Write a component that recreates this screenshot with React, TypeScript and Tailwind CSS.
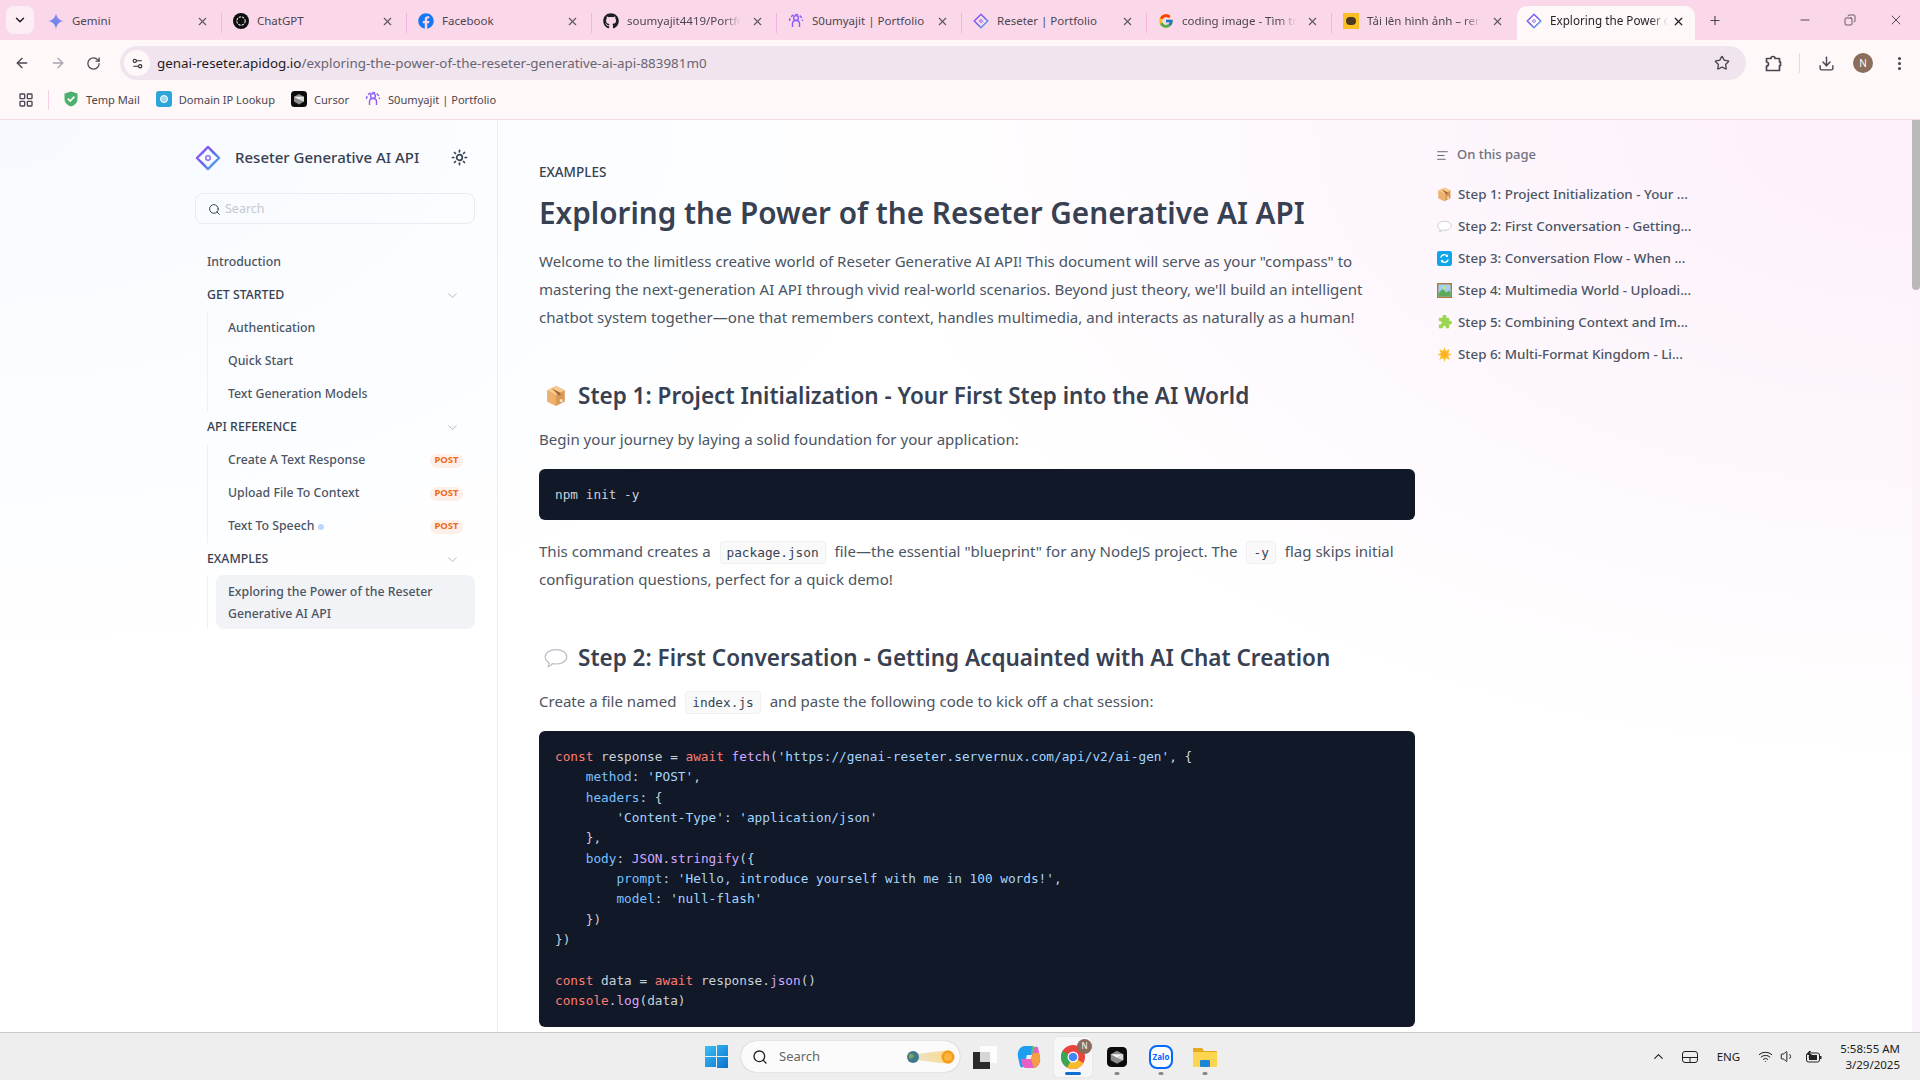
import type { ReactNode } from "react";
import {
  ArrowLeft,
  ArrowRight,
  ChevronDown,
  ChevronUp,
  Download,
  EllipsisVertical,
  LayoutGrid,
  Minus,
  Plus,
  RotateCw,
  Search,
  Settings2,
  Star,
  Sun,
  Volume1,
  Wifi,
  X,
  AlignLeft,
  Copy,
} from "lucide-react";
import { FaFacebook, FaGithub } from "react-icons/fa";
import { FcGoogle } from "react-icons/fc";

const ui = "font-['Noto_Sans','Open_Sans',sans-serif]";
const mono = "font-['DejaVu_Sans_Mono','Liberation_Mono',monospace]";

/* ---------- small drawings ---------- */

const ResetLogo = ({ size = 16 }: { size?: number }) => (
  <svg width={size} height={size} viewBox="0 0 28 28" fill="none">
    <defs>
      <linearGradient id="rl" x1="0" y1="0" x2="1" y2="1">
        <stop offset="0" stopColor="#a855f7" />
        <stop offset="0.5" stopColor="#6d5bf0" />
        <stop offset="1" stopColor="#4fc3e8" />
      </linearGradient>
    </defs>
    <path d="M14 2 Q18 9 26 14 Q18 19 14 26 Q10 19 2 14 Q10 9 14 2 Z" stroke="#5ed3e6" strokeWidth="1.4" strokeLinejoin="round" />
    <path d="M14 2 L26 14 L14 26 L2 14 Z" stroke="url(#rl)" strokeWidth="2.4" strokeLinejoin="round" />
    <circle cx="14" cy="14" r="2.4" stroke="#8b6cf0" strokeWidth="1.6" />
  </svg>
);

const PersonLogo = () => (
  <svg width="16" height="16" viewBox="0 0 16 16" fill="none" stroke="#8b5cf6" strokeWidth="1.4">
    <circle cx="8" cy="5" r="2.4" />
    <path d="M4.5 14 V10.5 a3.5 3 0 0 1 7 0 V14" />
    <path d="M1.5 8 a6.5 6.5 0 0 1 13 0" strokeDasharray="3 1.6" />
  </svg>
);

const GeminiStar = () => (
  <svg width="16" height="16" viewBox="0 0 16 16">
    <defs>
      <linearGradient id="gem" x1="0" y1="1" x2="1" y2="0">
        <stop offset="0" stopColor="#4285f4" />
        <stop offset="1" stopColor="#a98ae8" />
      </linearGradient>
    </defs>
    <path d="M8 0 C8.6 4.6 11.4 7.4 16 8 C11.4 8.6 8.6 11.4 8 16 C7.4 11.4 4.6 8.6 0 8 C4.6 7.4 7.4 4.6 8 0 Z" fill="url(#gem)" />
  </svg>
);

const ChatGptIcon = () => (
  <svg width="16" height="16" viewBox="0 0 16 16">
    <circle cx="8" cy="8" r="8" fill="#0d0d0d" />
    <circle cx="8" cy="8" r="4.2" fill="none" stroke="#e5e5e5" strokeWidth="1.1" strokeDasharray="2.4 1" />
  </svg>
);

const CursorIcon = ({ size = 16 }: { size?: number }) => (
  <svg width={size} height={size} viewBox="0 0 16 16">
    <rect width="16" height="16" rx="3.5" fill="#0b0b0b" />
    <path d="M8 3 L13 5.8 V10.6 L8 13.4 L3 10.6 V5.8 Z" fill="#8d8d8d" />
    <path d="M3 5.8 L13 5.8 L8 8.6 Z" fill="#f4f4f4" />
    <path d="M8 8.6 L13 5.8 V10.6 Z" fill="#d8d8d8" />
  </svg>
);

const BoxEmoji = ({ size = 14 }: { size?: number }) => (
  <svg width={size} height={size} viewBox="0 0 20 20">
    <path d="M10 1 L18 4.8 V15 L10 19 Z" fill="#d99a56" />
    <path d="M10 1 L2 4.8 V15 L10 19 Z" fill="#f2b76e" />
    <path d="M2 4.8 L10 9 L18 4.8 L10 1 Z" fill="#f8cc8f" />
    <path d="M10 9 V19 L2 15 V4.8 Z" fill="#eeb06a" />
    <path d="M6 2.9 L14 7 V10 L12 9.2" fill="#a9683a" />
    <rect x="13.5" y="13" width="2.5" height="2.5" fill="#f7e4c8" />
  </svg>
);

const BubbleEmoji = ({ size = 15 }: { size?: number }) => (
  <svg width={size} height={size} viewBox="0 0 20 20">
    <path
      d="M10 3 C15.2 3 19 5.6 19 9 C19 12.4 15.2 15 10 15 C9 15 8 14.9 7 14.7 C6 16 4.6 17 3.4 17.3 C4 16.3 4.3 15.2 4.3 13.9 C2.2 12.8 1 11 1 9 C1 5.6 4.8 3 10 3 Z"
      fill="#ffffff"
      stroke="#b9bec6"
      strokeWidth="1"
    />
  </svg>
);

const RefreshEmoji = () => (
  <svg width="15" height="15" viewBox="0 0 16 16">
    <rect width="16" height="16" rx="2.5" fill="#0ea5e9" />
    <path d="M4 7 a4 4 0 0 1 7-1.6 M12 9 a4 4 0 0 1-7 1.6" stroke="#fff" strokeWidth="1.5" fill="none" />
    <path d="M11.8 3.4 V6.4 H8.8 Z M4.2 12.6 V9.6 H7.2 Z" fill="#fff" />
  </svg>
);

const PictureEmoji = () => (
  <svg width="15" height="15" viewBox="0 0 16 16">
    <rect width="16" height="16" fill="#b5763d" />
    <rect x="1.5" y="1.5" width="13" height="13" fill="#9ad4ee" />
    <path d="M1.5 11 L6 6.5 L10 10 L12.5 8 L14.5 10 V14.5 H1.5 Z" fill="#5dab58" />
    <circle cx="8" cy="5" r="1.6" fill="#f9d65c" />
  </svg>
);

const PuzzleEmoji = () => (
  <svg width="15" height="15" viewBox="0 0 16 16">
    <path
      d="M6 1.5 a2 2 0 0 1 4 0 V3 h3 v3 h1 a2 2 0 0 1 0 4 h-1 v4 H9.5 v-1 a1.6 1.6 0 0 0-3.2 0 v1 H2 v-4 h1.2 a1.8 1.8 0 0 0 0-3.6 H2 V3 h4 Z"
      fill="#9ad651"
    />
  </svg>
);

const SunEmoji = () => (
  <svg width="15" height="15" viewBox="0 0 16 16">
    <path
      d="M8 0 L9.4 4 L13.6 2.4 L12 6.6 L16 8 L12 9.4 L13.6 13.6 L9.4 12 L8 16 L6.6 12 L2.4 13.6 L4 9.4 L0 8 L4 6.6 L2.4 2.4 L6.6 4 Z"
      fill="#fbc531"
    />
    <circle cx="8" cy="8" r="3.4" fill="#fdb022" />
  </svg>
);

/* ---------- browser chrome ---------- */

const tabs: { icon: ReactNode; title: string; fade?: boolean; sep?: boolean }[] = [
  { icon: <GeminiStar />, title: "Gemini", sep: true },
  { icon: <ChatGptIcon />, title: "ChatGPT", sep: true },
  { icon: <FaFacebook className="text-[#1877f2]" size={16} />, title: "Facebook", sep: true },
  { icon: <FaGithub className="text-[#1b1f23]" size={16} />, title: "soumyajit4419/Portfolio", fade: true, sep: true },
  { icon: <PersonLogo />, title: "S0umyajit | Portfolio", sep: true },
  { icon: <ResetLogo />, title: "Reseter | Portfolio", sep: true },
  { icon: <FcGoogle size={16} />, title: "coding image - Tìm trên Google", fade: true, sep: true },
  {
    icon: (
      <span className="flex h-4 w-4 items-center justify-center bg-[#fbbf24]">
        <span className="h-2 w-2.5 rounded-sm bg-[#4a3b1e]" />
      </span>
    ),
    title: "Tải lên hình ảnh – render",
    fade: true,
  },
];

const Tab = ({ icon, title, fade, sep }: { icon: ReactNode; title: string; fade?: boolean; sep?: boolean }) => (
  <div className="relative flex h-[34px] w-[185px] shrink-0 items-center pb-1 pl-[11px]">
    <span className="flex w-[24px] shrink-0">{icon}</span>
    <span
      className={`w-[114px] overflow-hidden whitespace-nowrap text-[11.5px] text-[#4b4650] ${
        fade ? "[mask-image:linear-gradient(to_right,black_85%,transparent)]" : ""
      }`}
    >
      {title}
    </span>
    <X size={13} strokeWidth={2} className="ml-[10px] text-[#5a5560]" />
    {sep && <span className="absolute right-0 top-[7px] h-[20px] w-[1.5px] bg-[#f4b3dc]" />}
  </div>
);

const TabStrip = () => (
  <div className={`flex h-10 items-end bg-[#fad8ea] ${ui}`}>
    <div className="mb-[6px] ml-[6px] mr-[3px] flex h-[28px] w-[28px] items-center justify-center rounded-lg bg-[#fdeef6]">
      <ChevronDown size={14} strokeWidth={2.5} className="text-[#1f1f1f]" />
    </div>
    {tabs.map((t) => (
      <Tab key={t.title} {...t} />
    ))}
    <div className="relative flex h-[34px] w-[178px] shrink-0 items-center rounded-t-[10px] bg-[#fff8f8] pb-1 pl-[9px]">
      <span className="flex w-[24px] shrink-0">
        <ResetLogo />
      </span>
      <span className="w-[118px] overflow-hidden whitespace-nowrap text-[11.7px] text-[#26222c] [mask-image:linear-gradient(to_right,black_85%,transparent)]">
        Exploring the Power of
      </span>
      <X size={13} strokeWidth={2.4} className="ml-[4px] text-[#26222c]" />
    </div>
    <div className="mb-[6px] ml-[13px] flex h-[28px] w-[14px] items-center justify-center">
      <Plus size={15} strokeWidth={2} className="text-[#4b4650]" />
    </div>
    <div className="mb-[6px] ml-auto flex h-[28px] items-center gap-[32px] pr-[16px] text-[#2f2a33]">
      <Minus size={14} strokeWidth={1.4} />
      <Copy size={12} strokeWidth={1.4} className="-scale-x-100" />
      <X size={16} strokeWidth={1.2} />
    </div>
  </div>
);

const Toolbar = () => (
  <div className={`flex h-10 items-center bg-[#fff8f8] pt-[6px] ${ui}`}>
    <div className="flex w-[120px] items-center gap-[20px] pl-[14px]">
      <ArrowLeft size={16} strokeWidth={2} className="text-[#4c4450]" />
      <ArrowRight size={16} strokeWidth={2} className="text-[#aaa3ad]" />
      <RotateCw size={15} strokeWidth={2} className="text-[#4c4450]" />
    </div>
    <div className="flex h-[34px] w-[1626px] items-center rounded-full bg-[#f0e5ee] pl-[4px] pr-[16px]">
      <span className="flex h-[26px] w-[26px] items-center justify-center rounded-full bg-[#fff8f8]">
        <Settings2 size={13} strokeWidth={2} className="text-[#2f2a33]" />
      </span>
      <span className="ml-[7px] whitespace-nowrap text-[13.4px] text-[#6a6370]">
        <span className="text-[#1f1b24]">genai-reseter.apidog.io</span>
        /exploring-the-power-of-the-reseter-generative-ai-api-883981m0
      </span>
      <Star size={16} strokeWidth={2} className="ml-auto text-[#4c4450]" />
    </div>
    <div className="flex flex-1 items-center pl-[19px] text-[#4c4450]">
      <svg width="17" height="17" viewBox="0 0 17 17" fill="none" stroke="#4c4450" strokeWidth="1.7" strokeLinejoin="round">
        <path d="M1.5 3.5 H6 a2 2 0 0 1 4 0 H14.5 V7 H15.5 V10.5 H14.5 V15.5 H1.5 V11 a2 2 0 0 0 0-4 Z" />
      </svg>
      <span className="ml-[17px] h-[20px] w-[1px] bg-[#f6cfe4]" />
      <Download size={17} strokeWidth={2} className="ml-[18px]" />
      <span className="ml-[18px] flex h-[20px] w-[20px] items-center justify-center rounded-full bg-[#8a6d5c] text-[10px] text-white">
        N
      </span>
      <EllipsisVertical size={17} strokeWidth={2.4} className="ml-[18px]" />
    </div>
  </div>
);

const Bookmark = ({ icon, label }: { icon: ReactNode; label: string }) => (
  <div className="flex items-center gap-[7px]">
    {icon}
    <span className="whitespace-nowrap pt-[1px] text-[11.1px] text-[#4b4650]">{label}</span>
  </div>
);

const Bookmarks = () => (
  <div className={`flex h-10 items-center border-b border-[#f3dce8] bg-[#fff8f8] pl-[18px] ${ui}`}>
    <LayoutGrid size={16} strokeWidth={2} className="text-[#4c4450]" />
    <span className="ml-[14px] mr-[14px] h-[20px] w-[1px] bg-[#f6cfe4]" />
    <div className="flex items-center gap-[16px]">
      <Bookmark
        icon={
          <svg width="16" height="16" viewBox="0 0 16 16">
            <path d="M8 0.5 L14.5 2.5 V8 C14.5 11.5 11.5 14.5 8 15.5 C4.5 14.5 1.5 11.5 1.5 8 V2.5 Z" fill="#4caf6e" />
            <path d="M4.8 7.6 L7.2 10 L11.4 5.6" fill="none" stroke="#fff" strokeWidth="1.7" />
          </svg>
        }
        label="Temp Mail"
      />
      <Bookmark
        icon={
          <span className="flex h-4 w-4 items-center justify-center rounded-[3px] bg-[#2ea5d8]">
            <span className="h-2 w-2 rounded-full border border-white bg-[#9ad7ee]" />
          </span>
        }
        label="Domain IP Lookup"
      />
      <Bookmark icon={<CursorIcon />} label="Cursor" />
      <Bookmark icon={<PersonLogo />} label="S0umyajit | Portfolio" />
    </div>
  </div>
);

/* ---------- docs sidebar ---------- */

const PostBadge = () => (
  <span className="ml-auto mr-[12px] flex h-[14px] w-[33px] items-center justify-center rounded-full bg-[#fdf0e8] text-[9.5px] font-bold text-[#f26a1b]">
    POST
  </span>
);

const GroupHead = ({ label }: { label: string }) => (
  <div className="flex h-[33px] items-center pl-[12px] pr-[15px] text-[12.3px] font-medium text-[#374151]">
    {label}
    <ChevronDown size={15} strokeWidth={1.3} className="ml-auto text-[#a8adb6]" />
  </div>
);

const NavItem = ({ children, post }: { children: ReactNode; post?: boolean }) => (
  <div className="flex h-[33px] items-center pl-[12px] text-[12.3px] font-medium text-[#4b5563]">
    {children}
    {post && <PostBadge />}
  </div>
);

const Nested = ({ children }: { children: ReactNode }) => (
  <div className="ml-[12px] border-l border-[#eef0f3] pl-[8px]">{children}</div>
);

const Sidebar = () => (
  <aside className="h-full w-[498px] shrink-0 border-r border-[#eceef2] pl-[195px] pr-[22px]">
    <div className="flex h-[73px] items-center pt-[2px]">
      <ResetLogo size={26} />
      <span className="ml-[14px] text-[15px] font-medium text-[#374151]">Reseter Generative AI API</span>
      <Sun size={17} strokeWidth={2.4} className="ml-auto mr-[7px] text-[#374151]" />
    </div>
    <div className="flex h-[31px] items-center rounded-lg border border-[#e8ebef] pl-[12px] pt-[1px]">
      <Search size={13} strokeWidth={1.8} className="text-[#374151]" />
      <span className="ml-[4px] pt-[1px] text-[12.5px] text-[#c3c7ce]">Search</span>
    </div>
    <div className="mt-[22px]">
      <NavItem>Introduction</NavItem>
      <GroupHead label="GET STARTED" />
      <Nested>
        <NavItem>Authentication</NavItem>
        <NavItem>Quick Start</NavItem>
        <NavItem>Text Generation Models</NavItem>
      </Nested>
      <GroupHead label="API REFERENCE" />
      <Nested>
        <NavItem post>Create A Text Response</NavItem>
        <NavItem post>Upload File To Context</NavItem>
        <NavItem post>
          Text To Speech
          <span className="ml-[4px] h-[6px] w-[6px] rounded-full bg-[#bcd7ff]" />
        </NavItem>
      </Nested>
      <GroupHead label="EXAMPLES" />
      <Nested>
        <div className="-mt-px rounded-lg bg-[#f2f3f7] pb-[4px] pl-[12px] pr-[8px] pt-[6px] text-[12.3px] font-medium leading-[22px] text-[#4b5563]">
          Exploring the Power of the Reseter Generative AI API
        </div>
      </Nested>
    </div>
  </aside>
);

/* ---------- article ---------- */

const InlineCode = ({ children }: { children: ReactNode }) => (
  <code className={`mx-[5px] rounded-[4px] border border-[#f0f0f2] bg-[#f9f9fa] px-[6px] py-[3px] text-[12.75px] leading-none text-[#374151] ${mono}`}>
    {children}
  </code>
);

const H2 = ({ icon, children }: { icon: ReactNode; children: ReactNode }) => (
  <h2 className="mt-[47px] flex h-[36px] items-center gap-[9px] pl-[3px] text-[22.5px] font-semibold text-[#374151]">
    <span className="flex w-[27px] justify-center">{icon}</span>
    {children}
  </h2>
);

type Tok = [string, "k" | "s" | "p" | "f" | "t"];

const tokColor: Record<Tok[1], string> = {
  k: "text-[#ff7b72]",
  s: "text-[#a5d6ff]",
  p: "text-[#79c0ff]",
  f: "text-[#d2a8ff]",
  t: "text-[#c9d1d9]",
};

const code: Tok[][] = [
  [
    ["const", "k"],
    [" response = ", "t"],
    ["await", "k"],
    [" ", "t"],
    ["fetch", "f"],
    ["(", "t"],
    ["'https://genai-reseter.servernux.com/api/v2/ai-gen'", "s"],
    [", {", "t"],
  ],
  [["    ", "t"], ["method", "p"], [": ", "t"], ["'POST'", "s"], [",", "t"]],
  [["    ", "t"], ["headers", "p"], [": {", "t"]],
  [["        ", "t"], ["'Content-Type'", "s"], [": ", "t"], ["'application/json'", "s"]],
  [["    },", "t"]],
  [["    ", "t"], ["body", "p"], [": ", "t"], ["JSON", "f"], [".", "t"], ["stringify", "f"], ["({", "t"]],
  [["        ", "t"], ["prompt", "p"], [": ", "t"], ["'Hello, introduce yourself with me in 100 words!'", "s"], [",", "t"]],
  [["        ", "t"], ["model", "p"], [": ", "t"], ["'null-flash'", "s"]],
  [["    })", "t"]],
  [["})", "t"]],
  [[" ", "t"]],
  [["const", "k"], [" data = ", "t"], ["await", "k"], [" response.", "t"], ["json", "f"], ["()", "t"]],
  [["console", "k"], [".", "t"], ["log", "f"], ["(data)", "t"]],
];

const Article = () => (
  <main className="w-[917px] shrink-0 pl-[41px] pt-[42px] text-[#4b5563]">
    <div className="h-[20px] text-[13.5px] font-medium leading-[20px] text-[#374151]">EXAMPLES</div>
    <h1 className="mt-[11px] text-[29.7px] font-semibold leading-[40px] text-[#374151]">
      Exploring the Power of the Reseter Generative AI API
    </h1>
    <p className="mt-[14px] text-[15.05px] leading-[28px]">
      Welcome to the limitless creative world of Reseter Generative AI API! This document will serve as your "compass"
      to mastering the next-generation AI API through vivid real-world scenarios. Beyond just theory, we'll build an
      intelligent chatbot system together—one that remembers context, handles multimedia, and interacts as naturally as
      a human!
    </p>
    <H2 icon={<BoxEmoji size={22} />}>Step 1: Project Initialization - Your First Step into the AI World</H2>
    <p className="mt-[11px] text-[15.05px] leading-[28px]">Begin your journey by laying a solid foundation for your application:</p>
    <pre className={`mt-[16px] flex h-[51px] items-center rounded-md bg-[#111827] px-[16px] text-[12.75px] text-[#c9d1d9] ${mono}`}>
      npm init -y
    </pre>
    <p className="mt-[17px] text-[15.05px] leading-[28px]">
      This command creates a <InlineCode>package.json</InlineCode> file—the essential "blueprint" for any NodeJS project.
      The <InlineCode>-y</InlineCode> flag skips initial configuration questions, perfect for a quick demo!
    </p>
    <H2 icon={<BubbleEmoji size={24} />}>Step 2: First Conversation - Getting Acquainted with AI Chat Creation</H2>
    <p className="mt-[11px] text-[15.05px] leading-[28px]">
      Create a file named <InlineCode>index.js</InlineCode> and paste the following code to kick off a chat session:
    </p>
    <pre className={`mt-[16px] rounded-md bg-[#111827] px-[16px] py-[16px] text-[12.75px] leading-[20.33px] ${mono}`}>
      {code.map((line, i) => (
        <div key={i} className="h-[20.33px]">
          {line.map(([text, kind], j) => (
            <span key={j} className={tokColor[kind]}>
              {text}
            </span>
          ))}
        </div>
      ))}
    </pre>
  </main>
);

const tocItems: { icon: ReactNode; label: string }[] = [
  { icon: <BoxEmoji size={15} />, label: "Step 1: Project Initialization - Your ..." },
  { icon: <BubbleEmoji />, label: "Step 2: First Conversation - Getting..." },
  { icon: <RefreshEmoji />, label: "Step 3: Conversation Flow - When ..." },
  { icon: <PictureEmoji />, label: "Step 4: Multimedia World - Uploadi..." },
  { icon: <PuzzleEmoji />, label: "Step 5: Combining Context and Im..." },
  { icon: <SunEmoji />, label: "Step 6: Multi-Format Kingdom - Li..." },
];

const Toc = () => (
  <aside className="flex-1 pl-[21px] pt-[24px]">
    <div className="flex h-[22px] items-center gap-[8px] text-[13px] font-medium text-[#6b7280]">
      <AlignLeft size={13} strokeWidth={1.6} className="text-[#4b5563]" />
      On this page
    </div>
    <div className="ml-[1px] mt-[12px]">
      {tocItems.map((item) => (
        <div key={item.label} className="flex h-[32px] items-center gap-[6px] whitespace-nowrap text-[13.4px] font-medium text-[#4b5563]">
          <span className="flex w-[15px] justify-center">{item.icon}</span>
          {item.label}
        </div>
      ))}
    </div>
  </aside>
);

const Scrollbar = () => (
  <div className="w-[8px] shrink-0 bg-[#fdf3fb]">
    <div className="h-[170px] rounded-b bg-[#b9b9b9]" />
  </div>
);

/* ---------- windows taskbar ---------- */

const WinLogo = () => (
  <svg width="23" height="23" viewBox="0 0 23 23">
    <defs>
      <linearGradient id="win" x1="0" y1="0" x2="1" y2="1">
        <stop offset="0" stopColor="#3bc3f3" />
        <stop offset="1" stopColor="#0a6fd0" />
      </linearGradient>
    </defs>
    <path d="M0 1 H11 V11 H0 Z M12 0 H23 V11 H12 Z M0 12 H11 V22 H0 Z M12 12 H23 V23 H12 Z" fill="url(#win)" />
  </svg>
);

const Dot = ({ active }: { active?: boolean }) => (
  <span className={`absolute bottom-[2px] left-1/2 h-[3px] -translate-x-1/2 rounded-full ${active ? "w-4 bg-[#0a6fd0]" : "w-[5px] bg-[#8a8a8a]"}`} />
);

const TaskIcon = ({ children, dot, active }: { children: ReactNode; dot?: boolean; active?: boolean }) => (
  <div className={`relative flex h-[40px] w-[38px] items-center justify-center rounded ${active ? "bg-[#f7f7f7] shadow-[0_0_1px_#bbb]" : ""}`}>
    {children}
    {dot && <Dot active={active} />}
  </div>
);

const Taskbar = () => (
  <footer className={`relative flex h-[48px] shrink-0 items-center border-t border-[#c9c9c9] bg-[#eeeeee] ${ui}`}>
    <div className="ml-[705px]">
      <WinLogo />
    </div>
    <div className="ml-[13px] flex h-[31px] w-[219px] items-center rounded-full bg-[#fbfbfb] pl-[11px] pr-[2px] shadow-[0_0_1px_#999]">
      <Search size={16} strokeWidth={2} className="text-[#222]" />
      <span className="ml-[11px] text-[13px] text-[#666]">Search</span>
      <svg width="52" height="16" viewBox="0 0 52 16" className="ml-auto">
        <defs>
          <linearGradient id="ecl" x1="0" y1="0" x2="1" y2="0">
            <stop offset="0" stopColor="#e9e3c8" />
            <stop offset="1" stopColor="#ffd98a" />
          </linearGradient>
        </defs>
        <path d="M10 5 L44 1 V15 L10 11 Z" fill="url(#ecl)" />
        <circle cx="7" cy="8" r="6" fill="#3f7a8c" />
        <path d="M3 5 Q7 4 8 7 Q6 11 3 9 Z" fill="#7fa55c" />
        <circle cx="42" cy="8" r="6.5" fill="#f79a1c" />
        <circle cx="42" cy="8" r="4" fill="#ffb53a" />
      </svg>
    </div>
    <div className="ml-[6px] flex items-center gap-[6px]">
      <TaskIcon>
        <svg width="24" height="24" viewBox="0 0 24 24">
          <rect x="7" y="1" width="17" height="17" fill="#fdfdfd" />
          <rect x="0" y="7" width="17" height="17" fill="#2a2a2a" />
          <rect x="7" y="7" width="10" height="10" fill="#d6d6d6" />
        </svg>
      </TaskIcon>
      <TaskIcon>
        <svg width="24" height="24" viewBox="0 0 24 24">
          <path d="M8 1 H15 C17 1 18 2 19 5 L20 10 H10 L7 20 C6 23 4 23 3 21 L1 12 C0 6 3 1 8 1 Z" fill="#1e9ef0" />
          <path d="M15 1 C17 1 18 2 19 5 L20 10 H14 Z" fill="#5bc46b" />
          <path d="M16 23 H9 C7 23 6 22 5 19 L4 14 H14 L17 4 C18 1 20 1 21 3 L23 12 C24 18 21 23 16 23 Z" fill="#e85ec4" />
          <path d="M14 14 L16 8 L22 8 L23 13 C23 18 21 22 17 23 Z" fill="#f59e42" />
        </svg>
      </TaskIcon>
      <TaskIcon dot active>
        <svg width="24" height="24" viewBox="0 0 24 24">
          <circle cx="12" cy="12" r="12" fill="#e8453c" />
          <path d="M12 12 L22.4 18 A12 12 0 0 1 6 22.4 Z" fill="#f9bb2d" />
          <path d="M12 12 L6 22.4 A12 12 0 0 1 1.6 6 Z" fill="#34a853" />
          <circle cx="12" cy="12" r="5.5" fill="#fff" />
          <circle cx="12" cy="12" r="4.3" fill="#4285f4" />
        </svg>
        <span className="absolute right-0 top-[2px] flex h-[15px] w-[15px] items-center justify-center rounded-full bg-[#8a6d5c] text-[8px] text-white">
          N
        </span>
      </TaskIcon>
      <TaskIcon dot>
        <CursorIcon size={20} />
      </TaskIcon>
      <TaskIcon dot>
        <span className="flex h-[24px] w-[24px] items-center justify-center rounded-[8px] border-2 border-[#0068ff] bg-white text-[8px] font-bold text-[#0068ff]">
          Zalo
        </span>
      </TaskIcon>
      <TaskIcon dot>
        <svg width="24" height="24" viewBox="0 0 24 24">
          <path d="M0 3 H9 L11 6 H24 V22 H0 Z" fill="#e8a820" />
          <rect y="7" width="24" height="15" fill="#fdd54e" />
          <rect x="7" y="15" width="10" height="7" rx="1" fill="#1c86d6" />
        </svg>
      </TaskIcon>
    </div>
    <div className="ml-auto flex items-center pr-[20px] text-[#1c1c1c]">
      <ChevronUp size={15} strokeWidth={1.8} />
      <svg width="16" height="12" viewBox="0 0 16 12" fill="none" stroke="#222" strokeWidth="1" className="ml-[16px]">
        <rect x="0.5" y="0.5" width="15" height="11" rx="2.5" />
        <path d="M0.5 6.5 H15.5 M8 6.5 V11.5" />
      </svg>
      <span className="ml-[19px] text-[11.5px]">ENG</span>
      <Wifi size={15} strokeWidth={1.6} className="ml-[18px]" />
      <Volume1 size={15} strokeWidth={1.6} className="ml-[7px]" />
      <svg width="16" height="12" viewBox="0 0 16 12" className="ml-[11px]">
        <rect x="0.5" y="2" width="13" height="9" rx="2" fill="none" stroke="#222" />
        <rect x="3" y="4" width="8" height="5" fill="#222" />
        <rect x="14" y="5" width="1.5" height="3" fill="#222" />
        <path d="M3 0 L1 4 H3.5 L2 7 L6 3 H3.5 L5 0 Z" fill="#222" />
      </svg>
      <div className="ml-[18px] text-right text-[11.5px] leading-[16px]">
        <div>5:58:55 AM</div>
        <div>3/29/2025</div>
      </div>
    </div>
  </footer>
);

export default function App() {
  return (
    <div className={`flex h-screen w-full flex-col overflow-hidden ${ui}`}>
      <TabStrip />
      <Toolbar />
      <Bookmarks />
      <div className="flex min-h-0 flex-1 overflow-hidden bg-[radial-gradient(ellipse_55%_70%_at_100%_0%,#fdf0fb_0%,#fdf4fc_35%,transparent_100%),radial-gradient(ellipse_50%_60%_at_0%_0%,#f6faff_0%,transparent_100%),linear-gradient(#ffffff,#ffffff)]">
        <Sidebar />
        <Article />
        <Toc />
        <Scrollbar />
      </div>
      <Taskbar />
    </div>
  );
}
